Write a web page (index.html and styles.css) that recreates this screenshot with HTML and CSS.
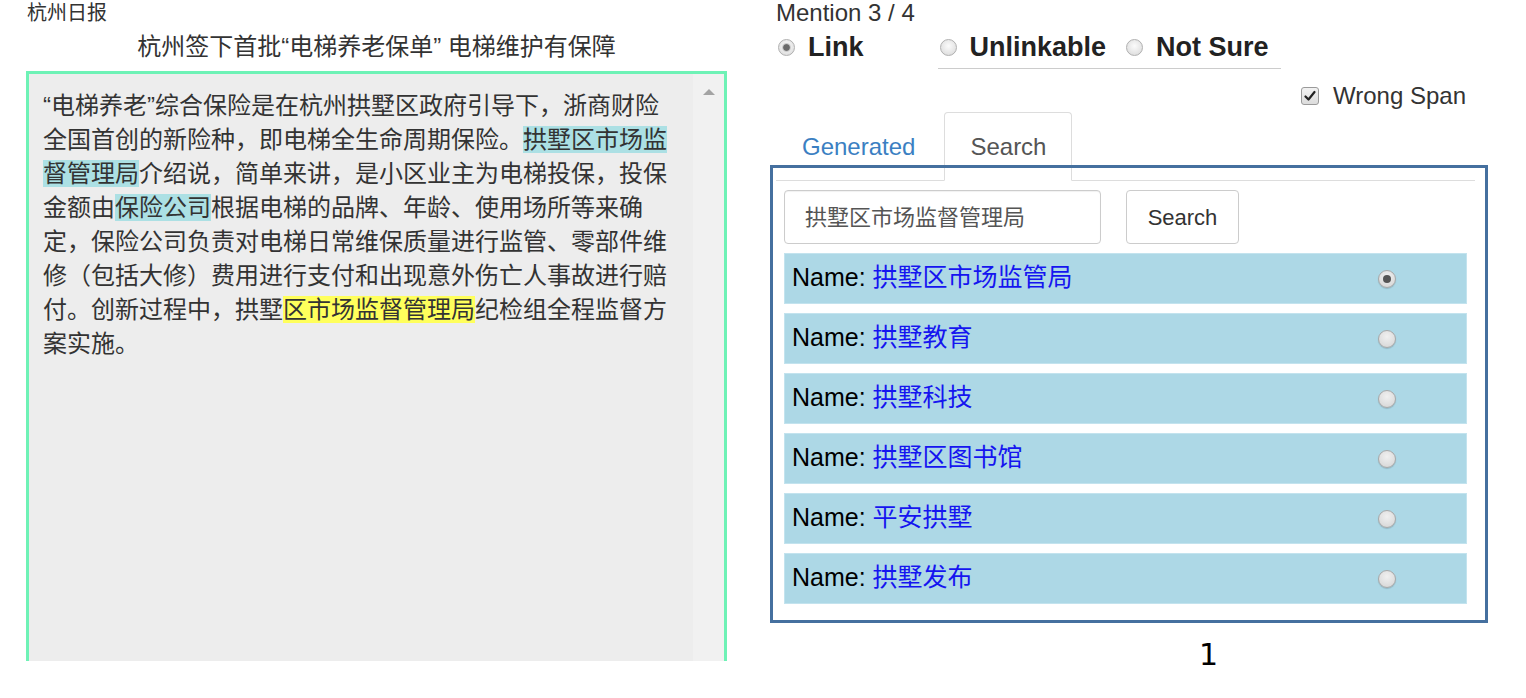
FILE: index.html
```html
<!DOCTYPE html>
<html lang="zh-CN">
<head>
<meta charset="utf-8">
<title>Entity Linking</title>
<link rel="stylesheet" href="styles.css">
</head>
<body>
<div class="page">
  <section class="left">
    <div class="source">杭州日报</div>
    <div class="title">杭州签下首批“电梯养老保单” 电梯维护有保障</div>
    <div class="doc">
      <div class="doc-text">“电梯养老”综合保险是在杭州拱墅区政府引导下，浙商财险全国首创的新险种，即电梯全生命周期保险。<span class="hl-blue">拱墅区市场监督管理局</span>介绍说，简单来讲，是小区业主为电梯投保，投保金额由<span class="hl-blue">保险公司</span>根据电梯的品牌、年龄、使用场所等来确定，保险公司负责对电梯日常维保质量进行监管、零部件维修（包括大修）费用进行支付和出现意外伤亡人事故进行赔付。创新过程中，拱墅<span class="hl-yellow">区市场监督管理局</span>纪检组全程监督方案实施。</div>
      <div class="scrollbar"><div class="arrow-up"></div></div>
    </div>
  </section>

  <section class="right">
    <div class="mention">Mention 3 / 4</div>
    <div class="choice-row">
      <label class="choice"><span class="radio checked"></span><span class="choice-label">Link</span></label>
      <div class="choice-group">
        <label class="choice"><span class="radio"></span><span class="choice-label">Unlinkable</span></label>
        <label class="choice"><span class="radio"></span><span class="choice-label">Not Sure</span></label>
      </div>
    </div>
    <div class="wrong-row">
      <span class="checkbox"><svg width="12" height="12" viewBox="0 0 12 12"><path d="M1.5 6.5 L4.5 9.5 L10.5 2" fill="none" stroke="#222" stroke-width="2.2" stroke-linecap="round" stroke-linejoin="round"/></svg></span>
      <span class="wrong-label">Wrong Span</span>
    </div>
    <ul class="tabs">
      <li class="tab"><a class="tab-link">Generated</a></li>
      <li class="tab active"><a class="tab-link">Search</a></li>
    </ul>
    <div class="tab-content">
      <div class="search-bar">
        <div class="search-input">拱墅区市场监督管理局</div>
        <div class="search-btn">Search</div>
      </div>
      <div class="results">
        <div class="result"><span class="name">Name: <a class="entity">拱墅区市场监管局</a></span><span class="rradio checked"></span></div>
        <div class="result"><span class="name">Name: <a class="entity">拱墅教育</a></span><span class="rradio"></span></div>
        <div class="result"><span class="name">Name: <a class="entity">拱墅科技</a></span><span class="rradio"></span></div>
        <div class="result"><span class="name">Name: <a class="entity">拱墅区图书馆</a></span><span class="rradio"></span></div>
        <div class="result"><span class="name">Name: <a class="entity">平安拱墅</a></span><span class="rradio"></span></div>
        <div class="result"><span class="name">Name: <a class="entity">拱墅发布</a></span><span class="rradio"></span></div>
      </div>
    </div>
    <div class="caption">1</div>
    <div class="frame"></div>
  </section>
</div>
</body>
</html>
```

FILE: styles.css
```css
html, body {
  margin: 0;
  padding: 0;
  background: #ffffff;
}
body {
  font-family: "Liberation Sans", "Noto Sans CJK SC", sans-serif;
  color: #333333;
  overflow: hidden;
  height: 698px;
}
.page {
  display: flex;
  align-items: flex-start;
  padding-left: 26px;
  gap: 49px;
}

/* left column */
.left {
  width: 701px;
  flex: none;
}
.source {
  font-size: 20px;
  line-height: 30px;
  height: 30px;
  padding-left: 1px;
  margin-top: -2px;
}
.title {
  font-size: 24px;
  line-height: 34px;
  text-align: center;
  margin-top: 2px;
  margin-bottom: 7px;
}
.doc {
  display: flex;
  height: 590px;
  border: 3px solid #6ef2b6;
  border-bottom: none;
  background: #ededed;
  box-sizing: border-box;
}
.doc-text {
  flex: 1;
  padding: 15px 20px 0 14px;
  font-size: 24px;
  line-height: 34px;
  color: #333333;
}
.hl-blue {
  background: #ace0e4;
}
.hl-yellow {
  background: #ffff5c;
}
.scrollbar {
  width: 31px;
  flex: none;
  background: #f1f1f1;
  display: flex;
  justify-content: center;
  padding-top: 15px;
  box-sizing: border-box;
}
.arrow-up {
  width: 0;
  height: 0;
  border-left: 6px solid transparent;
  border-right: 6px solid transparent;
  border-bottom: 6px solid #a3a3a3;
}

/* right column */
.right {
  position: relative;
  width: 712px;
  flex: none;
}
.mention {
  font-size: 24px;
  line-height: 26px;
  height: 26px;
}
.choice-row {
  display: flex;
  align-items: flex-start;
  height: 43px;
}
.choice {
  display: flex;
  align-items: center;
  height: 42px;
}
.choice-label {
  font-size: 27px;
  font-weight: bold;
  color: #222222;
  margin-left: 13px;
}
.choice-group {
  display: flex;
  margin-left: 74px;
  padding-right: 12px;
  border-bottom: 1px solid #cccccc;
}
.choice-group .choice + .choice {
  margin-left: 18px;
}
.radio {
  position: relative;
  width: 17px;
  height: 17px;
  box-sizing: border-box;
  border-radius: 50%;
  border: 1px solid #b0b0b0;
  background: radial-gradient(circle at 50% 40%, #fbfbfb 0%, #e2e2e2 70%, #d2d2d2 100%);
  margin-left: 2px;
}
.radio.checked::after {
  content: "";
  position: absolute;
  left: 3px;
  top: 3px;
  width: 9px;
  height: 9px;
  border-radius: 50%;
  background: radial-gradient(circle, #6a6a6a 0%, #6a6a6a 45%, #c9c9c9 60%, #e8e8e8 100%);
}
.wrong-row {
  display: flex;
  justify-content: flex-end;
  align-items: center;
  height: 33px;
  padding-top: 10px;
  padding-right: 22px;
}
.checkbox {
  width: 18px;
  height: 18px;
  box-sizing: border-box;
  border: 1px solid #9a9a9a;
  border-radius: 3px;
  background: linear-gradient(#f2f2f2, #dcdcdc);
  display: flex;
  align-items: center;
  justify-content: center;
  margin-right: 14px;
}
.wrong-label {
  font-size: 24px;
  color: #333333;
}
.tabs {
  list-style: none;
  margin: 0 13px 0 0;
  padding: 0;
  display: flex;
  border-bottom: 1px solid #dddddd;
}
.tab {
  margin-bottom: -1px;
  margin-right: 3px;
}
.tab:first-child {
  margin-left: 0;
}
.tab-link {
  display: block;
  padding: 0 25px;
  line-height: 67px;
  font-size: 24px;
  color: #3b7fc2;
  border: 1px solid transparent;
  border-radius: 4px 4px 0 0;
}
.tab.active .tab-link {
  color: #555555;
  background: #ffffff;
  border-color: #dddddd #dddddd transparent;
}
.tab-content {
  padding: 9px 0 0 8px;
}
.search-bar {
  display: flex;
  gap: 25px;
}
.search-input {
  width: 317px;
  height: 54px;
  box-sizing: border-box;
  border: 1px solid #cccccc;
  border-radius: 4px;
  padding-left: 20px;
  font-size: 22px;
  line-height: 54px;
  color: #555555;
  box-shadow: inset 0 1px 1px rgba(0, 0, 0, 0.06);
}
.search-btn {
  width: 113px;
  height: 54px;
  box-sizing: border-box;
  border: 1px solid #cccccc;
  border-radius: 4px;
  font-size: 22px;
  line-height: 54px;
  text-align: center;
  color: #333333;
  background: #ffffff;
}
.results {
  margin-top: 9px;
  display: flex;
  flex-direction: column;
  gap: 9px;
}
.result {
  width: 683px;
  height: 51px;
  box-sizing: border-box;
  background: #add8e6;
  border: 1px solid #c3e3ee;
  display: flex;
  align-items: center;
  justify-content: space-between;
  padding: 0 70px 0 7px;
}
.name {
  font-size: 25px;
  line-height: 30px;
  margin-top: -3px;
  color: #000000;
}
.entity {
  color: #1515f0;
}
.rradio {
  position: relative;
  width: 18px;
  height: 18px;
  box-sizing: border-box;
  border-radius: 50%;
  border: 1px solid #a8a8a8;
  background: radial-gradient(circle at 50% 35%, #f0f0f0 0%, #dcdcdc 70%, #cfcfcf 100%);
  box-shadow: 0 1px 1px rgba(0, 0, 0, 0.15);
}
.rradio.checked::after {
  content: "";
  position: absolute;
  left: 4px;
  top: 4px;
  width: 8px;
  height: 8px;
  border-radius: 50%;
  background: #555555;
}
.caption {
  margin-top: 33px;
  padding-left: 423px;
  font-family: "DejaVu Sans", sans-serif;
  font-size: 30px;
  line-height: 36px;
  color: #000000;
}
.frame {
  position: absolute;
  left: -6px;
  top: 165px;
  width: 718px;
  height: 458px;
  box-sizing: border-box;
  border: 3px solid #45709f;
  pointer-events: none;
}
```
